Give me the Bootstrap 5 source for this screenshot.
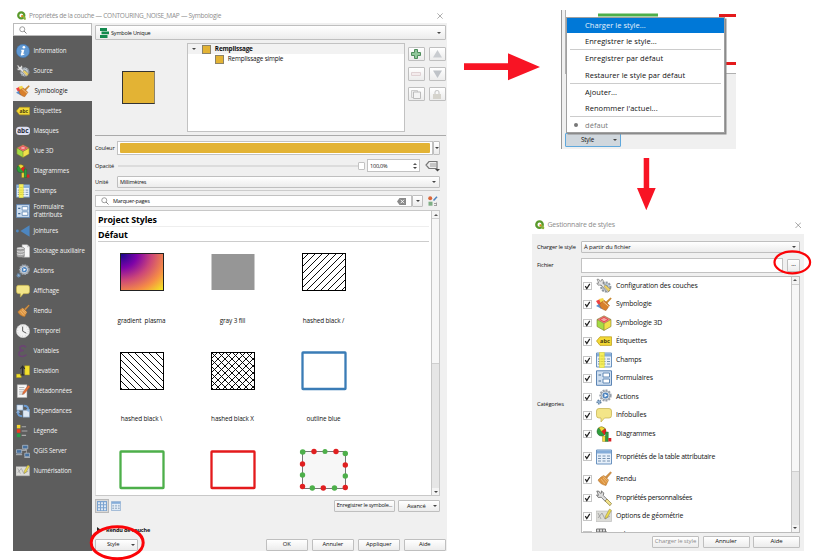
<!DOCTYPE html>
<html lang="fr">
<head>
<meta charset="utf-8">
<meta name="viewport" content="width=device-width, initial-scale=1">
<title>QGIS – Styles de couche</title>
<link href="https://cdn.jsdelivr.net/npm/bootstrap@5.3.0/dist/css/bootstrap.min.css" rel="stylesheet">
<style>
body{font-family:"Open Sans","Noto Sans",sans-serif;font-size:6.2px;line-height:8px;color:#111;letter-spacing:-.12px;background:#fff}
svg{display:block;flex:none}
.desk{width:818px;height:560px}
.win{position:absolute}
.w-layer{left:13px;top:8px;width:434px;height:543px}
.w-menu{left:561px;top:10px;width:175px;height:139px}
.w-mgr{left:532px;top:216px;width:272px;height:335px}
.over{position:absolute;left:0;top:0;pointer-events:none}
.titlebar{color:#8c8c8c;font-size:7px;letter-spacing:-.22px}
.w-layer .titlebar{height:15px;padding:0 4px;font-size:6.5px;letter-spacing:-.26px}
.w-mgr .titlebar{height:18px;padding:0 0 0 3px}
.bg-face{background:#f0f0f0}
.side{width:79px;flex:none;background:#5d5d5d}
.side-search{height:13px;background:#fff;border:1px solid #bbb;padding-left:5px;margin-bottom:4.6px}
.side-item{height:20px;color:#f2f2f2;padding-left:2.5px;gap:4px;line-height:7.5px;letter-spacing:-.12px}
.side-item svg{width:14px;height:14px}
.side-item.on{background:#f0f0f0;color:#111;gap:5px;letter-spacing:-.03px}
.pane{padding:2px 1px 0 3px;min-width:0}
.ctl{background:linear-gradient(#fff,#ececec);border:1px solid #bfbfbf;border-radius:1px}
.field{background:#fff;border:1px solid #c2c2c2}
.btx{height:11.5px;line-height:9px;text-align:center;padding:0;color:#111;white-space:nowrap}
.arr{width:0;height:0;border:2.2px solid transparent;border-top:2.6px solid #444;border-bottom:0;flex:none}
.arr.up{border-top:0;border-bottom:2.6px solid #555}
.renderer{height:15px;padding:0 4px 0 4px}
.preview{width:92px;padding-right:4px}
.swatch{background:#e3b334;border:1px solid #8c8368}
.swatch.big{width:33px;height:33px;border-color:#333 #8c8368 #333 #333}
.swatch.sm{width:9px;height:9px}
.tree{width:218px;height:89px;border:1px solid #c2c2c2;background:#fff;font-size:6.4px;letter-spacing:-.18px}
.tree-top{height:10px;background:#f2f2f2;padding-left:4px;font-weight:700}
.tbtn{width:17.5px;height:14px}
.lab{width:22px;flex:none;font-size:5.6px;letter-spacing:-.15px}
.hr1{height:1px;background:#aaa}
.lst{height:286px;border:1px solid #c8c8c8;border-left-color:#e0e0e0;background:#fff}
.heading{font-size:8.9px;font-weight:700;color:#000;line-height:13px;letter-spacing:-.08px;border-bottom:1px solid #eee;width:331px}
.sym-grid{display:grid;grid-template-columns:repeat(3,91px);grid-auto-rows:98.8px;padding-top:11.5px;margin-left:-2px}
.sym-cell{text-align:center;font-size:6.4px}
.sym-cell svg{margin:0 auto 25.5px;overflow:visible}
.sbar{background:#e6e6e6;border-left:1px solid #c6c6c6;flex:none}
.sbar-end{height:7px;background:#f4f4f4}
.sbar-thumb{background:#f7f7f7;border:solid #cfcfcf;border-width:1px 0}
.viewbtn{width:14px;height:14px}
.viewbtn.on{background:#d9d9d9;border:1px solid #b9b9b9}
.menu-pop{position:absolute;left:4px;top:7px;width:159px;height:116px;background:#fff;border:1px solid #a0a0a0;box-shadow:1.5px 1.5px 0 #8b8b8b;font-size:7.5px;letter-spacing:.05px}
.menu-pop .mi{height:16.3px;padding-left:18px;display:flex;align-items:center;color:#111}
.menu-pop .mi.hot{background:#0078d7;color:#e8f2fb;height:14.8px}
.menu-pop .sp{height:1px;background:#ccc;margin:0 3px}
.crop{height:64px;border-left:1px solid #b0b0b0;border-bottom:1px solid #b0b0b0;background:#fff;margin-left:3px}
.stylebtn{width:56px;height:14px;background:#d0d7dd;border:1px solid #5fa8dc;margin:59px 0 0 3px;border-radius:1px;font-size:6.2px}
.mgr-body{padding:7px 4px 0 5px;height:317px}
.mlab{width:44px;flex:none;font-size:5.7px;letter-spacing:-.14px}
.cats{height:257px;border:1px solid #bcbcbc;background:#fff;overflow:hidden}
.cat{height:18.5px;padding-left:1px;font-size:6.9px;letter-spacing:-.14px}
.cat.tall{height:27px}
.chk{width:8.5px;height:8.5px;border:1px solid #c6c6c6;background:#fff;margin-right:4.5px}
</style>
<script src="https://cdn.jsdelivr.net/npm/bootstrap@5.3.0/dist/js/bootstrap.bundle.min.js"></script>
</head>
<body>
<svg width="0" height="0" class="position-absolute" aria-hidden="true">
<defs>
<radialGradient id="plasma" cx="0" cy="0" r="1.4"><stop offset="0" stop-color="#12078a"/><stop offset=".28" stop-color="#7e03a8"/><stop offset=".52" stop-color="#cc4778"/><stop offset=".76" stop-color="#f68d45"/><stop offset="1" stop-color="#f4ee20"/></radialGradient>
<symbol id="q" viewBox="0 0 16 16"><circle cx="7.6" cy="7.8" r="5.4" fill="none" stroke="#5a9a2c" stroke-width="4"/><path d="M8 7.5h3.5l4 4.5v3.5h-3z" fill="#8bb53c"/><path d="M7.5 7.5h3v3h-3z" fill="#ee7913"/></symbol>
<symbol id="mag" viewBox="0 0 16 16"><circle cx="6.5" cy="6.5" r="5" fill="none" stroke="#777" stroke-width="1.4"/><path d="M10 10l5 5" stroke="#777" stroke-width="1.8"/></symbol>
<symbol id="x" viewBox="0 0 16 16"><path d="M1 1l14 14M15 1L1 15" stroke="#888" stroke-width="1.8"/></symbol>
<symbol id="info" viewBox="0 0 16 16"><circle cx="8" cy="8" r="7.6" fill="#5f98d3" stroke="#3c6da6" stroke-width=".6"/><circle cx="9" cy="3.7" r="1.5" fill="#fff"/><path d="M6 6.6h3.5L8.3 11.5l1.4-.3-.3 1.2-3 .8c-1 0-1-.9-.8-1.6L6.600 7.600H5.800z" fill="#fff"/></symbol>
<symbol id="gear" viewBox="0 0 16 16"><circle cx="9.800" cy="9" r="4.600" fill="#c8cfd6" stroke="#8f979f" stroke-width="2" stroke-dasharray="2 1"/><circle cx="9.800" cy="9" r="2.500" fill="#7aa6d2"/><path d="M1 1.200l2 .2.700 1.800 1.800-.4.5-1.800 1.500 2-.6 2.200 6.600 7-1.800 2.200-6.600-7.400-3 .2L.8 5l2 .2z" fill="#e5e5e5" stroke="#666" stroke-width=".6"/><path d="M8 8.600l4.600 4.800 1.700-2-4.600-4.400z" fill="#f0d468" stroke="#8c7a37" stroke-width=".5"/></symbol>
<symbol id="symb" viewBox="0 0 16 16"><path d="M0 5l4-2 3 4-2 6z" fill="#e44"/><path d="M3 3l4-1 2 4-4 2z" fill="#f2d84a"/><path d="M0 10l6 3 1-3-4-2z" fill="#5a91d0"/><path d="M14.500 1.500l1.200 1-4.500 5-1.700-1.500z" fill="#c98a32"/><path d="M5 6.500l3.500-2 5 5-3.500 5C7 14 4.500 12 3.500 9z" fill="#d8802c" stroke="#a0591e" stroke-width=".5"/><path d="M7 5.500l5.700 5" stroke="#f1c98a" stroke-width="1"/></symbol>
<symbol id="broom" viewBox="0 0 16 16"><path d="M14.500.8l1 1-4.600 5.400-1.500-1.400z" fill="#d69547" stroke="#9e6221" stroke-width=".4"/><path d="M5 6l3-1.500 4.500 4.500L10 14.500C6.500 14 3.500 12 2 9z" fill="#dd9440" stroke="#a96a25" stroke-width=".5"/><path d="M5 8l4 5M7 7l4 4.500M6.700 5l5.500 5" stroke="#f4c78a" stroke-width=".7"/></symbol>
<symbol id="tag" viewBox="0 0 16 16"><path d="M.5 8L4 3.800h11.500v8.600H4z" fill="#f3d936" stroke="#b79a17" stroke-width=".7"/><text x="4" y="10" font-size="5.600" font-weight="700" fill="#443a10" font-family="Open Sans,sans-serif" letter-spacing="0">abc</text></symbol>
<symbol id="mask" viewBox="0 0 16 16"><rect x="0" y="3" width="16" height="9.500" rx="4" fill="#dedff0"/><text x="1.300" y="10.700" font-size="7.400" font-weight="700" fill="#2e3140" font-family="Open Sans,sans-serif" letter-spacing="0">abc</text></symbol>
<symbol id="cube" viewBox="0 0 16 16"><path d="M8 .8l7 3.700L8 8.500 1 4.500z" fill="#ee7b7e"/><path d="M1 4.500l7 4v7l-7-4z" fill="#a4dc45"/><path d="M15 4.500l-7 4v7l7-4z" fill="#f0e04a"/><path d="M8 .8l7 3.700v7l-7 4-7-4v-7zM1 4.500l7 4 7-4M8 8.500v7" fill="none" stroke="#7d7a2c" stroke-width=".6"/><path d="M4 4.500L8 2.400l4 2.100L8 6.800z" fill="#f5a6a6" stroke="#d33" stroke-width=".7"/></symbol>
<symbol id="diag" viewBox="0 0 16 16"><circle cx="5.500" cy="5.500" r="4.500" fill="#2f9e3c" stroke="#1d5725" stroke-width=".5"/><path d="M5.500 5.500L2.800 1.500Q6-.5 9 2.400z" fill="#f4d63a" stroke="#8a7411" stroke-width=".4"/><path d="M5.500 5.500L9.500 2.500Q11 6 8.500 9z" fill="#e22020"/><path d="M6.500 10h3v5.500h-3z" fill="#f0d93b" stroke="#8a7411" stroke-width=".4"/><path d="M9.500 6h2.800v9.500H9.500z" fill="#2f9e3c" stroke="#1d5725" stroke-width=".4"/><path d="M12.300 12h3v3.500h-3z" fill="#d92222"/></symbol>
<symbol id="tbl" viewBox="0 0 16 16"><path d="M.5 1h15v14H.5z" fill="#e7f0fa" stroke="#6b93c0"/><path d="M1 1.500h14v3H1z" fill="#85add9"/><path d="M2 7h3M2 9.500h3M2 12h3M6.500 7h3M6.500 9.500h3M6.500 12h3M11 7h3M11 9.500h3M11 12h3" stroke="#7590ae" stroke-width="1"/></symbol>
<symbol id="champs" viewBox="0 0 16 16"><use href="#tbl"/><path d="M3.500.3h4.800v15.400H3.500z" fill="#f6ef5c" stroke="#d8cc2b" stroke-width=".5"/><path d="M4.500 4h3M4.500 7h3M4.500 9.500h3M4.500 12h3" stroke="#d3c83a" stroke-width=".8"/></symbol>
<symbol id="form" viewBox="0 0 16 16"><path d="M.5.8h15v14.500H.5z" fill="#cfdff0" stroke="#5b84b4"/><path d="M7 3h6.500v4H7zM7 9h6.500v4H7z" fill="#fff" stroke="#557fae" stroke-width=".9"/><path d="M2.500 5H5M2.500 11H5" stroke="#43688f" stroke-width="1.200"/></symbol>
<symbol id="join" viewBox="0 0 16 16"><circle cx="1.600" cy="8" r="1.600" fill="#4f88c0"/><path d="M5 8l10.500-6.500v13z" fill="#4d86bf"/></symbol>
<symbol id="stock" viewBox="0 0 16 16"><path d="M7 .8h6l2.500 2.500V15H7z" fill="#f7f7f7" stroke="#bbb" stroke-width=".5"/><path d="M12.500.8v3h3" fill="#ccc"/><path d="M.8 5v9c0 2 8.700 2 8.700 0V5z" fill="#a5a5a5" stroke="#555" stroke-width=".5"/><ellipse cx="5.150" cy="5" rx="4.350" ry="1.600" fill="#dadada" stroke="#555" stroke-width=".5"/><path d="M1 8c1 1.500 7 1.500 8.500 0M1 11c1 1.500 7 1.500 8.500 0" fill="none" stroke="#e4e4e4"/></symbol>
<symbol id="act" viewBox="0 0 16 16"><circle cx="9.500" cy="6.500" r="5.200" fill="#e1e5ea" stroke="#9aa2ac" stroke-width="2" stroke-dasharray="1.900 1.100"/><circle cx="9.500" cy="6.500" r="4.300" fill="#e6eaef" stroke="#858e99" stroke-width=".7"/><circle cx="9.500" cy="6.500" r="3" fill="#4b82bd"/><path d="M8.500 4.800L11.600 6.500 8.500 8.200z" fill="#fff"/><circle cx="3" cy="13" r="1.800" fill="#92b3d6" stroke="#60809f" stroke-width="1.600" stroke-dasharray="1.300 .8"/></symbol>
<symbol id="bub" viewBox="0 0 16 16"><path d="M3 1.500h10Q15.500 1.500 15.500 4v4.500Q15.500 11 13 11H8.500L5 15v-4H3Q.5 11 .5 8.500V4Q.5 1.500 3 1.500z" fill="#f3e588" stroke="#c2ae47" stroke-width=".7"/></symbol>
<symbol id="clock" viewBox="0 0 16 16"><circle cx="8" cy="8" r="7.600" fill="#f2f2f2" stroke="#c9c9c9" stroke-width=".7"/><circle cx="8" cy="8" r="6" fill="none" stroke="#aaa" stroke-width="1" stroke-dasharray=".6 2.540"/><path d="M7.600 3v5.200L11.800 10.500" fill="none" stroke="#555" stroke-width="1.100"/></symbol>
<symbol id="eps" viewBox="0 0 16 16"><path d="M11.500 3.500C8 .8 4 2.500 4.500 5c.3 1.700 2 2.300 4.200 2.300C5.500 7.500 3 9 3.300 11.500c.4 3.300 5.700 3.500 8.700.8" fill="none" stroke="#6c4374" stroke-width="1.700"/></symbol>
<symbol id="elev" viewBox="0 0 16 16"><path d="M10 2h5.500v10.500H10z" fill="#f2e02c" stroke="#a9961a" stroke-width=".5"/><path d="M.5 11.500h5.500V15.500H.5z" fill="#f2e02c" stroke="#a9961a" stroke-width=".5"/><path d="M7.500 12V3.500M5 5.500l2.500-3 2.500 3M5 12.500h4.500" fill="none" stroke="#2d2d2d" stroke-width="1.300"/></symbol>
<symbol id="meta" viewBox="0 0 16 16"><path d="M1.500.8h11V15.500h-11z" fill="#f7f7f7" stroke="#aaa" stroke-width=".5"/><path d="M3.500 4h6M3.500 6.500h6M3.500 9h5M3.500 11.500h6" stroke="#999" stroke-width=".8"/><path d="M14 1.500l2 1.600-6 7.600-2.700 1.300.8-3z" fill="#e4703a" stroke="#96492a" stroke-width=".4"/></symbol>
<symbol id="dep" viewBox="0 0 16 16"><path d="M1 1h7v6H1z M8 7h7.500v8H8z" fill="#dfe9f5" stroke="#7599c2" stroke-width=".6"/><path d="M2 9.500c0 3 2 4.500 5 4.500M14 6.500C14 3.500 12 2 9 2" fill="none" stroke="#6a9bd2" stroke-width="2.200"/><path d="M0 10l2.300-3.500L5 10zM11.500 6l2.500 3.500L16 6z" fill="#8bb4e0"/></symbol>
<symbol id="leg" viewBox="0 0 16 16"><path d="M1 1h4v4H1z" fill="#f3d42e"/><path d="M1 6h4v4H1z" fill="#ef3b1d"/><path d="M1 11h4v4H1z" fill="#22a045"/><path d="M6.500 3.200h5M6.500 8h6.500M6.500 13h5" stroke="#aaa" stroke-width="1.200"/></symbol>
<symbol id="srv" viewBox="0 0 16 16"><path d="M3 9V7h8V3M12 6v6" stroke="#aaa" fill="none" stroke-width=".8"/><path d="M7.500 1.500h6v4h-6zM.5 6.500h6v4h-6zM10 10.500h5.500v4H10z" fill="#47719f" stroke="#b7c3d0" stroke-width=".8"/><path d="M7 7h5M0 12.200h7M9.500 15.600h6.500" stroke="#c6cdd4" stroke-width=".9"/></symbol>
<symbol id="num" viewBox="0 0 16 16"><path d="M0 3h15.500v10.500H0z" fill="#dcdcd8" stroke="#aaa" stroke-width=".5"/><path d="M2 10l4-5 3 6 5-3M2 5l3 6" fill="none" stroke="#999" stroke-width=".8"/><path d="M13.500 1l2 1.300-4 7-2.300 1.500.3-2.700z" fill="#ead94c" stroke="#7c7234" stroke-width=".4"/></symbol>
<symbol id="wrench" viewBox="0 0 16 16"><path d="M.8 1l2.300.3.900 1.900L5.700 3 5.300.9l2.500 2L7.300 5.500l4 4-2 2-4-4.200-3 .2L.5 5l2 .3z" fill="#ddd" stroke="#555" stroke-width=".7"/><path d="M9 11l2-2 4.500 4.500-1.500 2.200z" fill="#f2e28a" stroke="#87783a" stroke-width=".7"/></symbol>
<symbol id="tick" viewBox="0 0 8 8"><path d="M1.500 3.600L3.200 6.300 6.600 1" fill="none" stroke="#222" stroke-width="1.400"/></symbol>
<pattern id="hA" width="7" height="7" patternUnits="userSpaceOnUse"><path d="M-1 8L8-1M-1 1L1-1M6 8L8 6" stroke="#000" stroke-width=".95"/></pattern>
<pattern id="hB" width="7" height="7" patternUnits="userSpaceOnUse"><path d="M-1-1L8 8M6-1L8 1M-1 6L1 8" stroke="#000" stroke-width=".95"/></pattern>
</defs>
</svg>

<main class="desk position-relative overflow-hidden">

<section class="win w-layer d-flex flex-column">
  <header class="titlebar d-flex align-items-center">
    <svg width="9" height="9" style="margin-right:3px"><use href="#q"/></svg>
    <span>Propriétés de la couche — CONTOURING_NOISE_MAP — Symbologie</span>
    <svg width="6" height="6" class="ms-auto"><use href="#x"/></svg>
  </header>
  <div class="d-flex flex-grow-1">
    <nav class="side d-flex flex-column">
      <div class="side-search d-flex align-items-center"><svg width="8" height="8"><use href="#mag"/></svg></div>
      <div class="side-item d-flex align-items-center"><svg><use href="#info"/></svg><span>Information</span></div>
      <div class="side-item d-flex align-items-center"><svg><use href="#gear"/></svg><span>Source</span></div>
      <div class="side-item on d-flex align-items-center"><svg><use href="#symb"/></svg><span>Symbologie</span></div>
      <div class="side-item d-flex align-items-center"><svg><use href="#tag"/></svg><span>Étiquettes</span></div>
      <div class="side-item d-flex align-items-center"><svg><use href="#mask"/></svg><span>Masques</span></div>
      <div class="side-item d-flex align-items-center"><svg><use href="#cube"/></svg><span>Vue 3D</span></div>
      <div class="side-item d-flex align-items-center"><svg><use href="#diag"/></svg><span>Diagrammes</span></div>
      <div class="side-item d-flex align-items-center"><svg><use href="#champs"/></svg><span>Champs</span></div>
      <div class="side-item d-flex align-items-center"><svg><use href="#form"/></svg><span>Formulaire<br>d'attributs</span></div>
      <div class="side-item d-flex align-items-center"><svg><use href="#join"/></svg><span>Jointures</span></div>
      <div class="side-item d-flex align-items-center"><svg><use href="#stock"/></svg><span class="text-nowrap">Stockage auxiliaire</span></div>
      <div class="side-item d-flex align-items-center"><svg><use href="#act"/></svg><span>Actions</span></div>
      <div class="side-item d-flex align-items-center"><svg><use href="#bub"/></svg><span>Affichage</span></div>
      <div class="side-item d-flex align-items-center"><svg><use href="#broom"/></svg><span>Rendu</span></div>
      <div class="side-item d-flex align-items-center"><svg><use href="#clock"/></svg><span>Temporel</span></div>
      <div class="side-item d-flex align-items-center"><svg><use href="#eps"/></svg><span>Variables</span></div>
      <div class="side-item d-flex align-items-center"><svg><use href="#elev"/></svg><span>Elevation</span></div>
      <div class="side-item d-flex align-items-center"><svg><use href="#meta"/></svg><span>Métadonnées</span></div>
      <div class="side-item d-flex align-items-center"><svg><use href="#dep"/></svg><span>Dépendances</span></div>
      <div class="side-item d-flex align-items-center"><svg><use href="#leg"/></svg><span>Légende</span></div>
      <div class="side-item d-flex align-items-center"><svg><use href="#srv"/></svg><span>QGIS Server</span></div>
      <div class="side-item d-flex align-items-center"><svg><use href="#num"/></svg><span>Numérisation</span></div>
    </nav>
    <div class="pane bg-face flex-grow-1 d-flex flex-column">
      <div class="ctl renderer d-flex align-items-center">
        <svg width="9" height="10" viewBox="0 0 9 10"><path d="M0 0h7v3H0zM1.500 3.600H9v2.700H1.500zM0 7h7.500v3H0z" fill="#138a4e"/></svg>
        <span style="margin-left:2px;font-size:5.5px;letter-spacing:-.18px">Symbole Unique</span><i class="arr ms-auto"></i>
      </div>
      <div class="d-flex" style="margin-top:3px">
        <div class="preview d-flex align-items-center justify-content-center"><div class="swatch big"></div></div>
        <div class="tree">
          <div class="tree-top d-flex align-items-center"><i class="arr"></i><div class="swatch sm" style="margin:0 4px 0 6px"></div>Remplissage</div>
          <div class="d-flex align-items-center" style="padding:0 0 0 27px;height:10px"><div class="swatch sm" style="margin-right:4px"></div>Remplissage simple</div>
        </div>
        <div class="d-grid" style="grid-template-columns:17.5px 17.5px;gap:6px 3.5px;align-content:start;margin:4px 0 0 3px">
          <div class="ctl tbtn d-flex align-items-center justify-content-center"><svg width="10" height="10" viewBox="0 0 10 10"><path d="M3.500.5h3v3h3v3h-3v3h-3v-3h-3v-3h3z" fill="#8fc79a" stroke="#4e8d5b"/></svg></div>
          <div class="ctl tbtn d-flex align-items-center justify-content-center"><svg width="9" height="8" viewBox="0 0 9 8"><path d="M4.500 0L9 7.500H0z" fill="#c9ccd0"/></svg></div>
          <div class="ctl tbtn d-flex align-items-center justify-content-center"><svg width="10" height="4" viewBox="0 0 10 4"><path d="M.5.500h9v3h-9z" fill="#f3ebec" stroke="#e0d2d4"/></svg></div>
          <div class="ctl tbtn d-flex align-items-center justify-content-center"><svg width="9" height="8" viewBox="0 0 9 8"><path d="M4.500 8L9 .5H0z" fill="#bfc3c8"/></svg></div>
          <div class="ctl tbtn d-flex align-items-center justify-content-center"><svg width="10" height="9" viewBox="0 0 10 9"><path d="M.5.500h6v7h-6z" fill="#eee" stroke="#ccc"/><path d="M2.500 2h7v6.500h-7z" fill="#f4f4f4" stroke="#bbb"/></svg></div>
          <div class="ctl tbtn d-flex align-items-center justify-content-center"><svg width="8" height="9" viewBox="0 0 8 9"><path d="M2 4V2.500a2 2 0 0 1 4 0V4" fill="none" stroke="#ccc" stroke-width="1.200"/><path d="M0 4h8v5H0z" fill="#d5d3cc"/></svg></div>
        </div>
      </div>
      <div class="hr1" style="margin:3px 0 5px"></div>
      <div class="d-flex align-items-center" style="height:14px;padding-right:6px">
        <span class="lab">Couleur</span>
        <div class="field flex-grow-1 h-100" style="padding:1px 2px"><div class="h-100" style="background:#e3b334;border-radius:1px"></div></div>
        <div class="ctl h-100 d-flex align-items-center justify-content-center" style="width:7px"><i class="arr"></i></div>
      </div>
      <div class="d-flex align-items-center" style="height:13px;margin:4px 0;padding-right:6px">
        <span class="lab">Opacité</span>
        <div class="flex-grow-1" style="height:2px;border:1px solid #dcdcdc;background:#fff;margin-left:1px"></div>
        <div class="field" style="width:7px;height:8px;border-radius:1px"></div>
        <div class="field h-100 d-flex align-items-center justify-content-between" style="width:53px;margin:0 5px 0 2px;padding:0 2px;font-size:5.5px;letter-spacing:-.2px"><span>100,0%</span><span class="d-flex flex-column" style="gap:2px"><i class="arr up"></i><i class="arr"></i></span></div>
        <svg width="15" height="12" viewBox="0 0 15 12"><path d="M4 1.500h8v7H4L1 5z" fill="#eee" stroke="#777" stroke-width="1.200"/><path d="M5 4h6M5 6h6" stroke="#888" stroke-width=".8"/><path d="M10 9h5l-2.500 2.500z" fill="#444"/></svg>
      </div>
      <div class="d-flex align-items-center" style="height:12px;padding-right:6px">
        <span class="lab">Unité</span>
        <div class="ctl flex-grow-1 h-100 d-flex align-items-center" style="padding:0 3px 0 2px;font-size:5.500px;letter-spacing:-.22px"><span>Millimètres</span><i class="arr ms-auto"></i></div>
      </div>
      <div class="hr1" style="margin:2px 6px 4px 0;background:#ccc"></div>
      <div class="d-flex" style="height:12px;padding-right:6px">
        <div class="field flex-grow-1 d-flex align-items-center" style="padding:0 5px;font-size:5.500px;letter-spacing:-.2px"><svg width="8" height="8" style="margin-right:4px"><use href="#mag"/></svg><span>Marquer-pages</span>
          <svg width="9" height="7" viewBox="0 0 9 7" class="ms-auto"><path d="M0 3.500L2.500 0H9v7H2.500z" fill="#8a8a8a"/><path d="M3.700 1.800l3.300 3.400M7 1.800L3.700 5.200" stroke="#fff" stroke-width=".9"/></svg></div>
        <div class="ctl d-flex align-items-center justify-content-center" style="width:11px"><i class="arr"></i></div>
        <svg width="10" height="10" viewBox="0 0 10 10" style="margin:1px 2px 0 5px"><circle cx="2.200" cy="2.300" r="2" fill="#d9663a"/><path d="M5.500 4.500L9 .8" stroke="#4f83bd" stroke-width="1.500"/><path d="M.5 5.700h4v4h-4z" fill="#7fae85"/><path d="M6 7.500h3M6 9.500h3M8.500 6.500v3" stroke="#999" stroke-width=".9"/></svg>
      </div>
      <div class="lst d-flex" style="margin:3px 6px 0 0">
        <div class="flex-grow-1 overflow-hidden" style="padding-left:2px">
          <div class="heading" style="padding-top:1.500px">Project Styles</div>
          <div class="heading" style="padding-top:1px;border-color:#ccc">Défaut</div>
          <div class="sym-grid">
            <div class="sym-cell"><svg width="44" height="38"><rect x=".5" y=".5" width="43" height="37" fill="url(#plasma)" stroke="#222"/></svg>gradient &nbsp;plasma</div>
            <div class="sym-cell"><svg width="44" height="38"><rect x=".5" y="1" width="43" height="36" fill="#969696"/></svg>gray 3 fill</div>
            <div class="sym-cell"><svg width="44" height="38"><rect x=".5" y=".5" width="43" height="37" fill="url(#hA)" stroke="#000"/></svg>hashed black /</div>
            <div class="sym-cell"><svg width="44" height="38"><rect x=".5" y=".5" width="43" height="37" fill="url(#hB)" stroke="#000"/></svg>hashed black \</div>
            <div class="sym-cell"><svg width="44" height="38"><rect x=".5" y=".5" width="43" height="37" fill="url(#hB)"/><rect x=".5" y=".5" width="43" height="37" fill="url(#hA)" stroke="#000"/></svg>hashed black X</div>
            <div class="sym-cell"><svg width="44" height="38"><rect x=".5" y=".5" width="43" height="36.500" fill="#fff" stroke="#3a7cb6" stroke-width="2.300" rx=".5"/></svg>outline blue</div>
            <div class="sym-cell"><svg width="44" height="38"><rect x=".5" y=".5" width="43" height="36.500" fill="#fff" stroke="#4daf4a" stroke-width="2.300" rx=".5"/></svg></div>
            <div class="sym-cell"><svg width="44" height="38"><rect x=".5" y=".5" width="43" height="36.500" fill="#fff" stroke="#e41a1c" stroke-width="2.300" rx=".5"/></svg></div>
            <div class="sym-cell"><svg width="44" height="38"><rect x=".5" y=".5" width="43" height="37" fill="#f7f7f7" stroke="#777"/><g fill="#4daf4a"><circle cx=".7" cy="1" r="2.800"/><circle cx="23" cy=".5" r="2.500"/><circle cx="43.300" cy="2.500" r="2.700"/><circle cx=".5" cy="24" r="2.700"/><circle cx="43.300" cy="25" r="2.700"/><circle cx="10.300" cy="37" r="2.700"/><circle cx="32.500" cy="37" r="2.700"/></g><g fill="#e01f20"><circle cx="12" cy=".5" r="2.700"/><circle cx="34" cy=".5" r="2.700"/><circle cx=".5" cy="13" r="2.700"/><circle cx="43.300" cy="14" r="2.700"/><circle cx=".5" cy="35.500" r="2.700"/><circle cx="21.300" cy="37" r="2.700"/><circle cx="43.300" cy="36.500" r="2.700"/></g></svg></div>
          </div>
        </div>
        <div class="sbar d-flex flex-column" style="width:8px">
          <div class="sbar-end d-flex align-items-center justify-content-center"><i class="arr up"></i></div>
          <div class="sbar-thumb" style="height:146px"></div>
          <div class="sbar-end d-flex align-items-center justify-content-center mt-auto"><i class="arr"></i></div>
        </div>
      </div>
      <div class="d-flex align-items-center" style="margin-top:3px;padding-right:6px">
        <div class="viewbtn on d-flex align-items-center justify-content-center"><svg width="10" height="10" viewBox="0 0 10 10"><path d="M0 0h10v10H0z" fill="#7ba3d0"/><path d="M1 1.200h2v2H1zM4 1.200h2v2H4zM7 1.200h2v2H7zM1 4.200h2v2H1zM4 4.200h2v2H4zM7 4.200h2v2H7zM1 7.200h2v2H1zM4 7.200h2v2H4zM7 7.200h2v2H7z" fill="#dfe9f4"/></svg></div>
        <div class="viewbtn d-flex align-items-center justify-content-center ms-0"><svg width="10" height="10"><use href="#tbl"/></svg></div>
        <div class="ctl btx ms-auto" style="width:61px;font-size:5.400px;letter-spacing:-.2px">Enregistrer le symbole...</div>
        <div class="ctl btx d-flex align-items-center justify-content-between" style="width:42px;margin-left:3px;padding:0 2px 0 8px;font-size:5.800px">Avancé<i class="arr"></i></div>
      </div>
      <div class="fw-bold d-flex align-items-center" style="font-size:5.500px;margin-top:13px;height:8px;padding-left:2px;letter-spacing:-.18px"><svg width="5" height="6" viewBox="0 0 5 6" style="margin-right:4px"><path d="M0 0l4 3-4 3z" fill="#222"/></svg>Rendu de couche</div>
      <div class="d-flex" style="gap:3.500px;margin-top:5px;font-size:5.800px">
        <div class="ctl btx d-flex align-items-center justify-content-between me-auto" style="width:43px;padding:0 2px 0 11px">Style<i class="arr"></i></div>
        <div class="ctl btx" style="width:42.500px">OK</div><div class="ctl btx" style="width:42.500px">Annuler</div><div class="ctl btx" style="width:42.500px">Appliquer</div><div class="ctl btx" style="width:42.500px">Aide</div>
      </div>
    </div>
  </div>
</section>

<section class="win w-menu bg-face" style="border-left:1px solid #999">
  <div class="crop overflow-hidden"><svg width="171" height="64"><path d="M32 5h60" stroke="#4daf4a" stroke-width="3"/><path d="M153 5.500h18M153 53.500h18" stroke="#e41a1c" stroke-width="3"/></svg></div>
  <div class="stylebtn d-flex align-items-center justify-content-between" style="padding:0 3px 0 15px">Style<i class="arr"></i></div>
  <div class="menu-pop">
    <div class="mi hot">Charger le style...</div>
    <div class="mi">Enregistrer le style...</div>
    <div class="sp"></div>
    <div class="mi">Enregistrer par défaut</div>
    <div class="mi">Restaurer le style par défaut</div>
    <div class="sp"></div>
    <div class="mi">Ajouter...</div>
    <div class="mi">Renommer l'actuel...</div>
    <div class="sp"></div>
    <div class="mi" style="padding-left:7px;color:#777"><svg width="4" height="4" style="margin-right:7px"><circle cx="2" cy="2" r="2" fill="#777"/></svg>défaut</div>
  </div>
</section>

<section class="win w-mgr">
  <header class="titlebar d-flex align-items-center">
    <svg width="9.500" height="9.500" style="margin-right:3px"><use href="#q"/></svg><span>Gestionnaire de styles</span>
    <svg width="6.500" height="6.500" class="ms-auto" style="margin-right:3px"><use href="#x"/></svg>
  </header>
  <div class="mgr-body bg-face">
    <div class="d-flex align-items-center" style="height:12px"><span class="mlab">Charger le style</span><div class="ctl flex-grow-1 h-100 d-flex align-items-center" style="padding:0 3px 0 2px;font-size:6px">À partir du fichier<i class="arr ms-auto"></i></div></div>
    <div class="d-flex align-items-center" style="height:15px;margin-top:4.500px"><span class="mlab">Fichier</span><div class="field flex-grow-1 h-100"></div><div class="ctl text-center" style="width:13px;height:13px;margin-left:4px">...</div></div>
    <div class="d-flex align-items-center" style="margin-top:3px">
      <span class="mlab">Catégories</span>
      <div class="cats flex-grow-1 d-flex">
        <div class="flex-grow-1">
          <div class="cat d-flex align-items-center"><span class="chk"><svg width="7" height="7"><use href="#tick"/></svg></span><svg width="16" height="16" class="me-1"><use href="#gear"/></svg>Configuration des couches</div>
          <div class="cat d-flex align-items-center"><span class="chk"><svg width="7" height="7"><use href="#tick"/></svg></span><svg width="16" height="16" class="me-1"><use href="#symb"/></svg>Symbologie</div>
          <div class="cat d-flex align-items-center"><span class="chk"><svg width="7" height="7"><use href="#tick"/></svg></span><svg width="16" height="16" class="me-1"><use href="#cube"/></svg>Symbologie 3D</div>
          <div class="cat d-flex align-items-center"><span class="chk"><svg width="7" height="7"><use href="#tick"/></svg></span><svg width="16" height="16" class="me-1"><use href="#tag"/></svg>Étiquettes</div>
          <div class="cat d-flex align-items-center"><span class="chk"><svg width="7" height="7"><use href="#tick"/></svg></span><svg width="16" height="16" class="me-1"><use href="#champs"/></svg>Champs</div>
          <div class="cat d-flex align-items-center"><span class="chk"><svg width="7" height="7"><use href="#tick"/></svg></span><svg width="16" height="16" class="me-1"><use href="#form"/></svg>Formulaires</div>
          <div class="cat d-flex align-items-center"><span class="chk"><svg width="7" height="7"><use href="#tick"/></svg></span><svg width="16" height="16" class="me-1"><use href="#act"/></svg>Actions</div>
          <div class="cat d-flex align-items-center"><span class="chk"><svg width="7" height="7"><use href="#tick"/></svg></span><svg width="16" height="16" class="me-1"><use href="#bub"/></svg>Infobulles</div>
          <div class="cat d-flex align-items-center"><span class="chk"><svg width="7" height="7"><use href="#tick"/></svg></span><svg width="16" height="16" class="me-1"><use href="#diag"/></svg>Diagrammes</div>
          <div class="cat tall d-flex align-items-center"><span class="chk"><svg width="7" height="7"><use href="#tick"/></svg></span><svg width="16" height="16" class="me-1"><use href="#tbl"/></svg><span style="letter-spacing:-.22px">Propriétés de la table attributaire</span></div>
          <div class="cat d-flex align-items-center"><span class="chk"><svg width="7" height="7"><use href="#tick"/></svg></span><svg width="16" height="16" class="me-1"><use href="#broom"/></svg>Rendu</div>
          <div class="cat d-flex align-items-center"><span class="chk"><svg width="7" height="7"><use href="#tick"/></svg></span><svg width="16" height="16" class="me-1"><use href="#wrench"/></svg><span style="letter-spacing:-.3px">Propriétés personnalisées</span></div>
          <div class="cat d-flex align-items-center"><span class="chk"><svg width="7" height="7"><use href="#tick"/></svg></span><svg width="16" height="16" class="me-1"><use href="#num"/></svg>Options de géométrie</div>
          <div class="cat d-flex align-items-center"><span class="chk"></span><svg width="16" height="16" viewBox="0 0 16 16" class="me-1"><path d="M.5 2h9v8h-9z" fill="#ddd" stroke="#777"/><path d="M.5 5h9M3.500 2v8M6.500 2v8" stroke="#777"/><path d="M9 4l3 3" stroke="#777" stroke-width="1.500"/></svg>Relations</div>
        </div>
        <div class="sbar d-flex flex-column" style="width:8.500px">
          <div class="sbar-end d-flex align-items-center justify-content-center"><i class="arr up"></i></div>
          <div class="sbar-thumb" style="height:188px"></div>
          <div class="sbar-end d-flex align-items-center justify-content-center mt-auto"><i class="arr"></i></div>
        </div>
      </div>
    </div>
    <div class="d-flex justify-content-end" style="gap:3.500px;margin-top:3.500px;font-size:6px">
      <div class="ctl btx" style="width:47px;color:#8b8b8b">Charger le style</div><div class="ctl btx" style="width:47px">Annuler</div><div class="ctl btx" style="width:47px">Aide</div>
    </div>
  </div>
</section>

<svg class="over" width="818" height="560">
  <path d="M464 63.300h44V53.300L540 67 508 80.300V70H464zM643.700 158h5.500v30h6.500L646.300 210.300 637 188h6.700z" fill="#f81424"/>
  <ellipse cx="117.200" cy="542.700" rx="26" ry="16" fill="none" stroke="#fb0307" stroke-width="3"/>
  <ellipse cx="792.300" cy="262.300" rx="17.800" ry="11" fill="none" stroke="#fb0307" stroke-width="2.200"/>
</svg>
</main>
</body>
</html>
